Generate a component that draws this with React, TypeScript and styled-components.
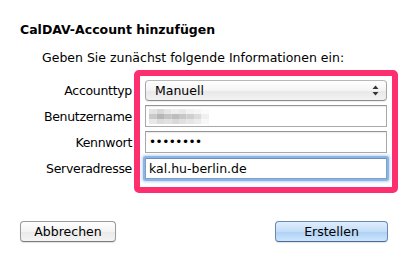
import styled, { createGlobalStyle } from "styled-components";

const GlobalStyle = createGlobalStyle`
    html, body {
        margin: 0;
        padding: 0;
        background: #ffffff;
    }
    body {
        font-family: "DejaVu Sans", "Liberation Sans", sans-serif;
        font-size: 13px;
        color: #000;
    }
`

const PASSWORD_DOTS = 8;

// blurred user name, drawn as a mosaic of grey cells
const mosaic = [
    ["#e4e4e4", "#d8d8d8", "#e6e6e6", "#eeeeee", "#e9e9e9", "#f2f2f2", "#f6f6f6", "#fbfbfb"],
    ["#c9c9c9", "#b6b6b6", "#c4c4c4", "#bdbdbd", "#c7c7c7", "#cfcfcf", "#dcdcdc", "#f0f0f0"],
    ["#e8e8e8", "#dcdcdc", "#e1e1e1", "#d9d9d9", "#e0e0e0", "#e6e6e6", "#ececec", "#f8f8f8"],
];

function App() {
    return (
        <>
            <GlobalStyle/>
            <Sheet>
                <Title>CalDAV-Account hinzufügen</Title>
                <Intro>Geben Sie zunächst folgende Informationen ein:</Intro>
                <Form>
                    <Labels>
                        <Label>Accounttyp</Label>
                        <Label>Benutzername</Label>
                        <Label>Kennwort</Label>
                        <Label>Serveradresse</Label>
                    </Labels>
                    <Highlight>
                        <Row>
                            <Popup>
                                <span>Manuell</span>
                                <svg width="7" height="11" viewBox="0 0 7 11">
                                    <path d="M0.5 4 L3.5 0.5 L6.5 4 Z" fill="#333"/>
                                    <path d="M0.5 7 L3.5 10.5 L6.5 7 Z" fill="#333"/>
                                </svg>
                            </Popup>
                        </Row>
                        <Row>
                            <Field>
                                <svg width="60" height="15" viewBox="0 0 60 15">
                                    {mosaic.map((line, r) =>
                                        line.map((c, i) => (
                                            <rect key={`${r}-${i}`} x={i * 7.5} y={r * 5} width="7.5" height="5" fill={c}/>
                                        ))
                                    )}
                                </svg>
                            </Field>
                        </Row>
                        <Row>
                            <Field>
                                <Dots>{"•".repeat(PASSWORD_DOTS)}</Dots>
                            </Field>
                        </Row>
                        <Row>
                            <Field focused>kal.hu-berlin.de</Field>
                        </Row>
                    </Highlight>
                </Form>
                <Buttons>
                    <Button>Abbrechen</Button>
                    <Button primary>Erstellen</Button>
                </Buttons>
            </Sheet>
        </>
    )
}

const Sheet = styled.div`
    width: 408px;
    height: 263px;
    box-sizing: border-box;
    padding-top: 22px;
    display: flex;
    flex-direction: column;
`

const Title = styled.div`
    margin-left: 20px;
    font-weight: bold;
    font-size: 12.5px;
    line-height: 15px;
`

const Intro = styled.div`
    margin: 13px 0 0 42px;
    font-size: 12.5px;
    line-height: 16px;
`

const Form = styled.div`
    display: flex;
    margin-top: 4px;
`

const Labels = styled.div`
    width: 132px;
    flex-shrink: 0;
    padding-top: 7px;
    display: flex;
    flex-direction: column;
`

const Label = styled.div`
    height: 26px;
    display: flex;
    align-items: center;
    justify-content: flex-end;
    font-size: 12.5px;
    letter-spacing: -0.3px;
`

const Highlight = styled.div`
    width: 264px;
    flex-shrink: 0;
    box-sizing: border-box;
    margin-left: 2px;
    border: 6px solid #fd2f6e;
    border-radius: 5px;
    padding: 1px 5px 6px 5px;
    display: flex;
    flex-direction: column;
`

const Row = styled.div`
    height: 26px;
    display: flex;
    align-items: center;
`

const Popup = styled.div`
    width: 100%;
    height: 21px;
    box-sizing: border-box;
    border: 1px solid #a5a5a5;
    border-top-color: #b8b8b8;
    border-bottom-color: #8e8e8e;
    border-radius: 4px;
    background: linear-gradient(#ffffff, #f4f4f4 50%, #e8e8e8 51%, #f2f2f2);
    box-shadow: 0 1px 1px rgba(0, 0, 0, 0.08);
    display: flex;
    align-items: center;
    justify-content: space-between;
    padding: 0 7px 0 9px;
    font-size: 12.5px;
`

const Field = styled.div<{ focused?: boolean }>`
    width: 100%;
    height: ${p => p.focused ? "21px" : "22px"};
    box-sizing: border-box;
    border: 1px solid ${p => p.focused ? "#7e9fc9" : "#a9a9a9"};
    border-top-color: ${p => p.focused ? "#6a8fc0" : "#959595"};
    background: #fff;
    box-shadow: ${p => p.focused ? "0 0 0 2px #8cb4e6, 0 0 3px 3px rgba(100, 150, 220, 0.4)" : "inset 0 1px 1px rgba(0, 0, 0, 0.08)"};
    border-radius: ${p => p.focused ? "1px" : "0"};
    display: flex;
    align-items: center;
    padding: 0 3px;
    font-size: 12.5px;
`

const Dots = styled.span`
    letter-spacing: -0.5px;
    font-size: 12px;
`

const Buttons = styled.div`
    display: flex;
    justify-content: space-between;
    margin-top: 28px;
    padding: 0 20px 0 20px;
`

const Button = styled.div<{ primary?: boolean }>`
    width: ${p => p.primary ? "113px" : "96px"};
    height: 21px;
    box-sizing: border-box;
    border: 1px solid ${p => p.primary ? "#6a87b6" : "#9a9a9a"};
    border-bottom-color: ${p => p.primary ? "#4f6d9c" : "#7c7c7c"};
    border-radius: 4px;
    background: ${p => p.primary
        ? "linear-gradient(#e0eefc, #c3ddf8 50%, #aed0f5 51%, #cbe5fc)"
        : "linear-gradient(#ffffff, #f3f3f3 50%, #e9e9e9 51%, #f4f4f4)"};
    box-shadow: 0 1px 1px rgba(0, 0, 0, 0.12);
    display: flex;
    align-items: center;
    justify-content: center;
    font-size: 12.5px;
`

export default App;
